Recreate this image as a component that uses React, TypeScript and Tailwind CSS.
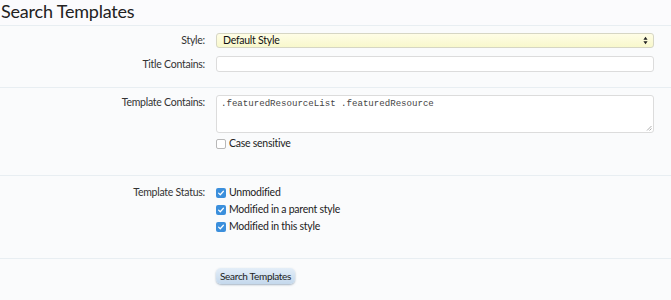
import React from 'react';

const font = { fontFamily: '"Trebuchet MS", Lato, "DejaVu Sans", sans-serif' };

function Label({ children }: { children: React.ReactNode }) {
  return <div className="w-[206px] shrink-0 pr-[1px] text-right text-[10.5px] leading-[15px] tracking-[-0.25px] text-[#333]">{children}</div>;
}

function Check({ checked, label }: { checked: boolean; label: string }) {
  return (
    <div className="flex h-[15px] items-center gap-[3px] text-[10.5px] tracking-[-0.25px] text-[#222]">
      {checked ? (
        <span className="flex h-[10px] w-[10px] items-center justify-center rounded-[2px] bg-[#3b8fdc]">
          <svg viewBox="0 0 10 10" className="h-[8px] w-[8px]">
            <path d="M2 5.2 L4.1 7.2 L8 2.8" fill="none" stroke="#fff" strokeWidth="1.5" strokeLinecap="round" strokeLinejoin="round" />
          </svg>
        </span>
      ) : (
        <span className="h-[10px] w-[10px] rounded-[2px] border border-[#b8b8b8] bg-white" />
      )}
      <span>{label}</span>
    </div>
  );
}

export default function App() {
  return (
    <div className="h-[300px] w-[671px] overflow-hidden bg-[#fafbfc]" style={font}>
      <div className="h-[26px] border-b border-[#e8eef2] bg-[#fbfbfd] pl-[1px]">
        <h1 className="text-[18px] leading-[23px] tracking-[-0.2px] text-[#222]">Search Templates</h1>
      </div>

      <div className="flex flex-col gap-[8px] border-b border-[#e8eef2] pb-[15px] pt-[7px]">
        <div className="flex items-center gap-[10px]">
          <Label>Style:</Label>
          <div className="flex h-[15px] w-[438px] items-center justify-between rounded-[3px] border border-[#d6d6c4] bg-gradient-to-b from-[#fffde6] to-[#f8f8cc] pl-[6px] pr-[5px] text-[10.5px] tracking-[-0.25px] text-[#111]">
            <span>Default Style</span>
            <svg viewBox="0 0 6 10" className="h-[9px] w-[5px]">
              <path d="M3 0.5 L5.5 4 L0.5 4 Z M3 9.5 L5.5 6 L0.5 6 Z" fill="#222" />
            </svg>
          </div>
        </div>
        <div className="flex items-center gap-[10px]">
          <Label>Title Contains:</Label>
          <div className="h-[16px] w-[438px] rounded-[3px] border border-[#dcdcdc] bg-white" />
        </div>
      </div>

      <div className="flex flex-col gap-[3px] border-b border-[#e8eef2] pb-[24px] pt-[7px]">
        <div className="flex items-start gap-[10px]">
          <Label>Template Contains:</Label>
          <div className="relative h-[38px] w-[438px] rounded-[3px] border border-[#dcdcdc] bg-white px-[4px] pt-[2px] text-[9.1px] leading-[12px] text-[#444]" style={{ fontFamily: '"Liberation Mono", monospace' }}>
            .featuredResourceList .featuredResource
            <svg viewBox="0 0 6 6" className="absolute bottom-[1px] right-[1px] h-[6px] w-[6px]">
              <path d="M5.5 1 L1 5.5 M5.5 3.5 L3.5 5.5" stroke="#999" strokeWidth="0.8" />
            </svg>
          </div>
        </div>
        <div className="flex gap-[10px]">
          <div className="w-[206px] shrink-0" />
          <Check checked={false} label="Case sensitive" />
        </div>
      </div>

      <div className="flex border-b border-[#e8eef2] pb-[24px] pt-[9px]">
        <div className="flex gap-[10px]">
          <Label>Template Status:</Label>
          <div className="flex flex-col gap-[2px]">
            <Check checked label="Unmodified" />
            <Check checked label="Modified in a parent style" />
            <Check checked label="Modified in this style" />
          </div>
        </div>
      </div>

      <div className="flex gap-[10px] pt-[9px]">
        <div className="w-[206px] shrink-0" />
        <button className="h-[16px] rounded-[5px] bg-gradient-to-b from-[#e4eef8] to-[#c4d8ec] px-[4px] text-[10px] leading-[16px] tracking-[-0.3px] text-[#222] shadow-[0_1px_2px_rgba(80,110,140,0.5)]">
          Search Templates
        </button>
      </div>
    </div>
  );
}
